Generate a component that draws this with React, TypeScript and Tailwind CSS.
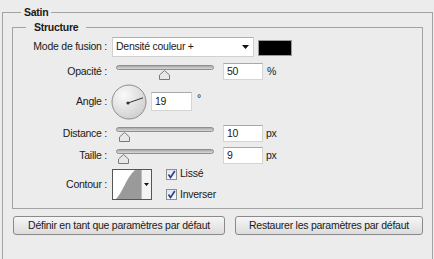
import React from "react";

const font = { fontFamily: '"Liberation Sans", Arial, sans-serif' };

function Slider({ pos }: { pos: number }) {
  return (
    <div className="relative h-[17px] w-[98px]">
      <div className="mt-[4px] h-[5px] rounded-full border border-[#8e8e8e] bg-gradient-to-b from-[#a9a9a9] to-[#d9d9d9]" />
      <svg
        className="absolute top-[5px]"
        style={{ left: pos }}
        width="11"
        height="10"
        viewBox="0 0 11 10"
      >
        <path
          d="M5.5 0.5 L10.5 5 L10.5 9.5 L0.5 9.5 L0.5 5 Z"
          fill="#e8e8e8"
          stroke="#7a7a7a"
        />
      </svg>
    </div>
  );
}

function NumField({ value }: { value: string }) {
  return (
    <div className="flex h-[17px] w-[40px] items-center border border-[#d4d4d4] border-t-[#a8a8a8] bg-white pl-[3px]">
      {value}
    </div>
  );
}

function Label({ children }: { children: React.ReactNode }) {
  return <div className="w-[95px] shrink-0 pr-[1px] text-right">{children}</div>;
}

function Check({ label }: { label: string }) {
  return (
    <div className="flex items-center gap-[3px]">
      <div className="flex h-[11px] w-[11px] items-center justify-center border border-[#8f8f8f] bg-gradient-to-b from-[#dfe6f3] to-[#f6f8fb]">
        <svg width="9" height="9" viewBox="0 0 9 9">
          <path d="M1.5 4.5 L3.5 7.5 L7.8 1" fill="none" stroke="#2b3d8f" strokeWidth="1.6" />
        </svg>
      </div>
      <span>{label}</span>
    </div>
  );
}

export default function App() {
  return (
    <div
      className="h-[259px] w-[434px] overflow-hidden bg-[#ececec] text-[10.5px] tracking-[-0.25px] text-[#1a1a1a]"
      style={font}
    >
      <fieldset className="ml-[2px] mt-[6px] h-[300px] w-[431px] border border-[#a3a3a3]">
        <legend className="ml-[18px] px-[3px] font-bold leading-[13px]">Satin</legend>

        <fieldset className="ml-[9px] mt-[2px] w-[411px] border border-[#a3a3a3] pb-[8px]">
          <legend className="ml-[13px] px-[8px] font-bold leading-[13px]">Structure</legend>

          {/* Mode de fusion */}
          <div className="mt-[3px] flex h-[20px] items-center">
            <Label>Mode de fusion :</Label>
            <div className="ml-[4px] flex h-[20px] w-[142px] items-center justify-between border border-[#d0d0d0] border-t-[#b0b0b0] bg-white pl-[3px] pr-[4px]">
              <span>Densité couleur +</span>
              <svg width="7" height="4" viewBox="0 0 7 4">
                <path d="M0 0 H7 L3.5 4 Z" fill="#111" />
              </svg>
            </div>
            <div className="ml-[4px] mt-[1px] h-[16px] w-[34px] border border-[#9a9a9a] bg-black" />
          </div>

          {/* Opacité */}
          <div className="mt-[6px] flex h-[17px] items-center">
            <Label>Opacité :</Label>
            <div className="ml-[8px]">
              <Slider pos={43} />
            </div>
            <div className="ml-[9px]">
              <NumField value="50" />
            </div>
            <span className="ml-[4px]">%</span>
          </div>

          {/* Angle */}
          <div className="mt-[4px] flex h-[35px] items-center">
            <Label>Angle :</Label>
            <svg className="ml-[3px]" width="36" height="36" viewBox="0 0 36 36">
              <defs>
                <radialGradient id="dial" cx="35%" cy="30%" r="75%">
                  <stop offset="0%" stopColor="#fafafa" />
                  <stop offset="100%" stopColor="#cfcfcf" />
                </radialGradient>
              </defs>
              <circle cx="18" cy="18" r="17" fill="url(#dial)" stroke="#8d8d8d" />
              <line x1="17" y1="19" x2="32" y2="13.8" stroke="#333" strokeWidth="1" />
              <circle cx="17" cy="19" r="1.6" fill="#333" />
            </svg>
            <div className="ml-[4px] flex h-[19px] w-[41px] items-center border border-[#d4d4d4] border-t-[#a8a8a8] bg-white pl-[3px]">
              19
            </div>
            <span className="ml-[5px] -mt-[5px]">°</span>
          </div>

          {/* Distance */}
          <div className="mt-[6px] flex h-[17px] items-center">
            <Label>Distance :</Label>
            <div className="ml-[8px]">
              <Slider pos={3} />
            </div>
            <div className="ml-[9px]">
              <NumField value="10" />
            </div>
            <span className="ml-[3px]">px</span>
          </div>

          {/* Taille */}
          <div className="mt-[5px] flex h-[17px] items-center">
            <Label>Taille :</Label>
            <div className="ml-[8px]">
              <Slider pos={2} />
            </div>
            <div className="ml-[9px]">
              <NumField value="9" />
            </div>
            <span className="ml-[3px]">px</span>
          </div>

          {/* Contour */}
          <div className="mt-[5px] flex h-[31px] items-center">
            <Label>Contour :</Label>
            <div className="ml-[4px] flex h-[31px] w-[40px] border border-[#555] bg-white">
              <svg width="29" height="29" viewBox="0 0 29 29">
                <path d="M3 29 C10 22 13 8 22 0 L28 0 L28 29 Z" fill="#9a9a9a" />
                <rect x="28" y="0" width="1" height="29" fill="#bdbdbd" />
              </svg>
              <div className="flex flex-1 items-center justify-center bg-[#f4f4f4]">
                <svg width="5" height="3" viewBox="0 0 5 3">
                  <path d="M0 0 H5 L2.5 3 Z" fill="#111" />
                </svg>
              </div>
            </div>
            <div className="ml-[14px] flex flex-col gap-[5px]">
              <Check label="Lissé" />
              <Check label="Inverser" />
            </div>
          </div>
        </fieldset>

        <div className="ml-[10px] mt-[7px] flex gap-[10px]">
          <button className="h-[19px] w-[212px] rounded-[3px] border border-[#8a8a8a] bg-gradient-to-b from-[#f6f6f6] to-[#dcdcdc]">
            Définir en tant que paramètres par défaut
          </button>
          <button className="h-[19px] w-[188px] rounded-[3px] border border-[#8a8a8a] bg-gradient-to-b from-[#f6f6f6] to-[#dcdcdc]">
            Restaurer les paramètres par défaut
          </button>
        </div>
      </fieldset>
    </div>
  );
}
